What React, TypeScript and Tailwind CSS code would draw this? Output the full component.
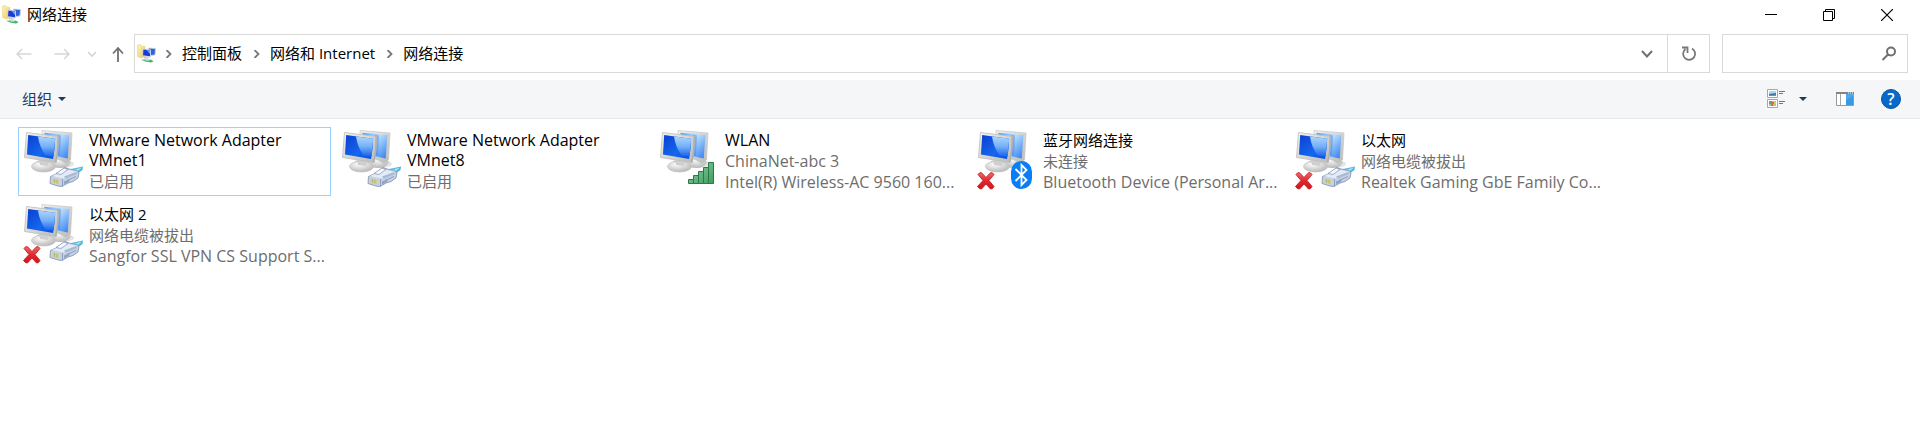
import type { ReactNode } from "react";

type Badge = "plug" | "signal" | "bluetooth";

interface Connection {
  name: string;
  details: string[];
  badge: Badge;
  disconnected?: boolean;
  selected?: boolean;
}

const connections: Connection[] = [
  { name: "VMware Network Adapter VMnet1", details: ["已启用"], badge: "plug", selected: true },
  { name: "VMware Network Adapter VMnet8", details: ["已启用"], badge: "plug" },
  { name: "WLAN", details: ["ChinaNet-abc 3", "Intel(R) Wireless-AC 9560 160..."], badge: "signal" },
  { name: "蓝牙网络连接", details: ["未连接", "Bluetooth Device (Personal Ar..."], badge: "bluetooth", disconnected: true },
  { name: "以太网", details: ["网络电缆被拔出", "Realtek Gaming GbE Family Co..."], badge: "plug", disconnected: true },
  { name: "以太网 2", details: ["网络电缆被拔出", "Sangfor SSL VPN CS Support S..."], badge: "plug", disconnected: true },
];

const latinOnly = /^[\x20-\x7e]+$/;

function textSize(text: string) {
  return latinOnly.test(text) ? "text-[16px]" : "text-[15px]";
}

function Gradients() {
  return (
    <svg width="0" height="0" className="absolute" aria-hidden="true">
      <defs>
        <linearGradient id="screen" x1="0" y1="0" x2="1" y2="1">
          <stop offset="0" stopColor="#0a3fd0" />
          <stop offset="0.6" stopColor="#1566ee" />
          <stop offset="1" stopColor="#0a50e0" />
        </linearGradient>
        <linearGradient id="glare" x1="0" y1="0" x2="0" y2="1">
          <stop offset="0" stopColor="#b5dcfb" />
          <stop offset="0.5" stopColor="#7ab4f8" />
          <stop offset="1" stopColor="#1764ef" />
        </linearGradient>
        <linearGradient id="backScreen" x1="0" y1="0" x2="1" y2="1">
          <stop offset="0" stopColor="#4e9df5" />
          <stop offset="0.4" stopColor="#b9defa" />
          <stop offset="1" stopColor="#2d7cf3" />
        </linearGradient>
        <linearGradient id="frame" x1="0" y1="0" x2="1" y2="1">
          <stop offset="0" stopColor="#f3f3f1" />
          <stop offset="1" stopColor="#b9b9b7" />
        </linearGradient>
        <radialGradient id="base" cx="0.4" cy="0.3" r="0.7">
          <stop offset="0" stopColor="#ffffff" />
          <stop offset="1" stopColor="#b8b8b8" />
        </radialGradient>
        <linearGradient id="bars" x1="0" y1="0" x2="1" y2="1">
          <stop offset="0" stopColor="#8fd3a3" />
          <stop offset="1" stopColor="#3f9b60" />
        </linearGradient>
        <linearGradient id="cross" x1="0" y1="0" x2="0" y2="1">
          <stop offset="0" stopColor="#f4696c" />
          <stop offset="0.5" stopColor="#e0282e" />
          <stop offset="1" stopColor="#d81219" />
        </linearGradient>
        <linearGradient id="folder" x1="0" y1="0" x2="1" y2="1">
          <stop offset="0" stopColor="#fff3b8" />
          <stop offset="1" stopColor="#ecc95f" />
        </linearGradient>
      </defs>
    </svg>
  );
}

function ConnectionIcon({ badge, disconnected }: { badge: Badge; disconnected?: boolean }) {
  return (
    <svg width="62" height="62" viewBox="0 0 62 62" className="shrink-0" aria-hidden="true">
      <ellipse cx="39" cy="34" rx="12" ry="4" fill="#d0d0d0" opacity="0.6" />
      <path d="M30 31 39 26 48 32Q45 38 37 38L29 37Z" fill="url(#base)" />
      <path d="M19 .5 49 3 47.500 30 43 33.500 37 30 20 24Z" fill="url(#frame)" stroke="#c4c4c2" strokeWidth="0.7" />
      <path d="M21 2.700 46.500 5 44.700 28.500 33 26Z" fill="url(#backScreen)" />
      <path d="M34 5 38 5.500 37 26 33 25Z" fill="#3781ee" opacity="0.45" />
      <path d="M14 31 27 29 30 37 16 38Z" fill="#b2b2b1" />
      <ellipse cx="20.500" cy="36.500" rx="12" ry="5.500" fill="url(#base)" stroke="#c4c4c4" strokeWidth="0.7" />
      <path d="M16 29 26 31 25 36 17 35Z" fill="#cfcfce" />
      <path d="M3.500 2.500 35.500 6.500Q35.500 21 33 32.500L1.500 27.500Z" fill="url(#frame)" stroke="#bcbdbd" strokeWidth="0.8" />
      <path d="M35 7Q35.200 21 32.700 32.300" fill="none" stroke="#acadad" strokeWidth="1.200" />
      <path d="M5.200 5 32.200 8.700Q31.900 20 30 29L4 24.500Z" fill="url(#screen)" />
      <path d="M15 6.500 32.200 8.700 30.500 26.500 22.500 25.500Q16.500 17 15 6.500Z" fill="url(#glare)" opacity="0.95" />
      {badge === "plug" && (
        <g strokeLinejoin="round">
          <path d="M48 39 60 36.500 59.500 40 54 44 48 43Z" fill="#4db8dc" />
          <path d="M50 40 59 37.500 55 41Z" fill="#a5e2f4" />
          <path d="M27.500 46.500 34 43.500 42 37.500 46 39 54 40.500 56 43 55 48 50 51.500 45 53 39 56.500 35 56 27 53.500Z" fill="#c5d1e4" stroke="#8798b8" strokeWidth="0.900" />
          <path d="M29 46 40 48.500 54 42 44 39.500Z" fill="#e3ebf6" />
          <path d="M33 43.500 41 38 45 39.500 38 44.500Z" fill="#f5f8fd" stroke="#8090b0" strokeWidth="0.700" />
          <path d="M41 46.500 53 42 54 44 43 48.500Z" fill="#a9bad5" />
          <path d="M39.500 49V56M44 50.500 53 46.500" fill="none" stroke="#8799bb" strokeWidth="0.900" />
          <path d="M41 51.500 47 49 46 52 41 54.500Z" fill="#8fa3c4" />
          <path d="M29.500 48.500 36 50V54L29.500 52.500Z" fill="#d6cf7c" />
          <path d="M31.500 49V53M34 49.500V53.500" stroke="#a9aa78" strokeWidth="0.700" />
        </g>
      )}
      {badge === "signal" && (
        <g fill="url(#bars)" stroke="#287a49" strokeWidth="1">
          <path d="M29.500 49.500h5v4h-5zM34.500 45.500h5v8h-5zM39.500 41.500h5v12h-5zM44.500 37.500h5v16h-5zM49.500 32.500h5v21h-5z" />
        </g>
      )}
      {badge === "bluetooth" && (
        <g>
          <rect x="34" y="31" width="21" height="28" rx="10.500" fill="#0a7ff5" />
          <path d="M38.500 39 49.500 50 44.500 55V35L49.500 40 38.500 51" fill="none" stroke="#fff" strokeWidth="1.800" strokeLinejoin="miter" />
        </g>
      )}
      {disconnected && (
        <path
          transform="translate(-1.500 -1)"
          d="M2.500 45.500Q4 43 6 43.700L10.500 48.500 15 43.700Q17 43 18.500 45.500L13.500 51.500 18.500 57.500Q17 60.500 15 60L10.500 55 6 60Q4 60.500 2 57.500L7.500 51.500Z"
          fill="url(#cross)"
          stroke="#bd2227"
          strokeWidth="0.900"
        />
      )}
    </svg>
  );
}

function NetworkFolderIcon() {
  return (
    <svg width="20" height="20" viewBox="0 0 20 20" className="shrink-0" aria-hidden="true">
      <path d="M.5 1 3.500 .5 4.500 2 8 2.500V13L4 14 .5 12.500Z" fill="url(#folder)" stroke="#e6cd7c" strokeWidth="0.500" />
      <path d="M11.500 4 18.500 4.500 18 11 13 11.500Z" fill="#2f62d6" stroke="#cbd5e2" strokeWidth="0.900" />
      <path d="M6 5 13.500 5.800V12.800L5.500 11.700Z" fill="#1a3bd0" stroke="#d4dce8" strokeWidth="0.900" />
      <path d="M9.500 6 13 6.500V10Z" fill="#6fa7f2" />
      <path d="M7 12.800 12.500 13.500 11.500 14.800 7 14.500Z" fill="#c5cbd0" />
      <path d="M4 15.800 8 15.500 10 16 14 15.500 16.500 17.500 14 18.500 9 17.800Z" fill="#43b66a" />
      <path d="M8 15.500 11 15.500 13 17 9 17Z" fill="#a9c9ba" />
    </svg>
  );
}

function Stroke({ size = 16, d, width = 1.5, className = "" }: { size?: number; d: string; width?: number; className?: string }) {
  return (
    <svg width={size} height={size} viewBox={`0 0 ${size} ${size}`} fill="none" stroke="currentColor" strokeWidth={width} className={`shrink-0 ${className}`} aria-hidden="true">
      <path d={d} />
    </svg>
  );
}

function WindowButton({ label, children }: { label: string; children: ReactNode }) {
  return (
    <button type="button" aria-label={label} className="flex h-full w-[58px] items-center justify-center hover:bg-gray-200">
      {children}
    </button>
  );
}

function Crumb({ children }: { children: ReactNode }) {
  return (
    <li className="flex items-center">
      <Stroke size={8} d="M1.500 0 5.500 4 1.500 8" width={1.8} className="mr-[9px] text-[#777]" />
      <a href="#" className="whitespace-pre">{children}</a>
    </li>
  );
}

function ConnectionTile({ item }: { item: Connection }) {
  return (
    <li className={`flex h-[69px] w-[313px] border ${item.selected ? "border-[#99d1ff]" : "border-transparent"}`}>
      <a href="#" className="flex min-w-0 flex-1 gap-1 pt-[2px] pl-1">
        <ConnectionIcon badge={item.badge} disconnected={item.disconnected} />
        <span className="flex min-w-0 flex-1 flex-col">
          <span className={`pb-px leading-5 ${textSize(item.name)}`}>{item.name}</span>
          {item.details.map((line) => (
            <span key={line} className={`leading-[21px] whitespace-nowrap text-[#6d6d6d] ${textSize(line)}`}>{line}</span>
          ))}
        </span>
      </a>
    </li>
  );
}

export default function App() {
  return (
    <div className="min-h-screen bg-white font-['Open_Sans','Noto_Sans_CJK_SC',sans-serif] text-[15px] text-black">
      <Gradients />
      <header className="flex h-[29px] items-center pl-[2px]">
        <NetworkFolderIcon />
        <h1 className="ml-[5px] flex-1">网络连接</h1>
        <div className="flex h-full pr-1">
          <WindowButton label="最小化"><Stroke size={12} d="M0 5.500H12" width={1} /></WindowButton>
          <WindowButton label="向下还原"><Stroke size={12} d="M.5 2.500H9.500V11.500H.5ZM2.500 2.500V.5H11.500V9.500H9.500" width={1} /></WindowButton>
          <WindowButton label="关闭"><Stroke size={12} d="M0 0 12 12M12 0 0 12" width={1.2} /></WindowButton>
        </div>
      </header>

      <div className="flex items-center gap-3 pt-[5px] pr-3 pb-[7px]">
        <nav className="flex flex-1 items-center" aria-label="导航">
          <div className="flex w-[134px] items-center pl-4 text-[#d6d6d6]">
            <button type="button" aria-label="后退"><Stroke d="M15.500 8H1M6 3 1 8 6 13" /></button>
            <button type="button" aria-label="前进" className="ml-[22px]"><Stroke d="M.5 8H15M10 3 15 8 10 13" /></button>
            <button type="button" aria-label="最近的位置" className="ml-[18px]"><Stroke size={8} d="M0 2 4 6 8 2" width={1.6} /></button>
            <button type="button" aria-label="上移" className="ml-[14px] text-[#707070]"><Stroke d="M8 16.500V2M3 7.500 8 2 13 7.500" width={1.8} /></button>
          </div>
          <div className="flex h-[39px] flex-1 items-center border border-[#d9d9d9] pl-[2px]">
            <NetworkFolderIcon />
            <ol className="ml-2 flex flex-1 items-center gap-[11px]">
              <Crumb>控制面板</Crumb>
              <Crumb>网络和 Internet</Crumb>
              <Crumb>网络连接</Crumb>
            </ol>
            <button type="button" aria-label="以前的位置" className="flex h-full w-10 items-center justify-center text-[#707070]">
              <Stroke size={12} d="M1 3 6 8.500 11 3" width={2} />
            </button>
            <button type="button" aria-label="刷新" className="flex h-full w-[42px] items-center justify-center border-l border-[#d9d9d9] text-[#777]">
              <Stroke d="M11 2.500A6 6 0 1 1 4.500 3M1 1.500H6.500V7" width={1.8} />
            </button>
          </div>
        </nav>
        <form className="flex h-[39px] w-[186px] items-center border border-[#d9d9d9] pr-[10px]">
          <input type="text" aria-label="搜索" className="h-full min-w-0 flex-1 px-2 outline-none" />
          <button type="button" aria-label="开始搜索" className="text-[#707070]">
            <Stroke d="M7 8.500 1.500 14M10 1.500a4 4 0 1 1 0 8a4 4 0 1 1 0-8" width={2} />
          </button>
        </form>
      </div>

      <div className="flex h-[39px] items-center border-b border-[#e6e7ea] bg-[#f5f6f8] pr-[19px] pl-[22px] text-[#1e395b]">
        <button type="button" className="flex items-center gap-[6px]">
          组织
          <svg width="8" height="4" viewBox="0 0 8 4" aria-hidden="true"><path d="M0 0H8L4 4Z" fill="currentColor" /></svg>
        </button>
        <div className="ml-auto flex items-center">
          <button type="button" aria-label="更改视图">
            <svg width="18" height="20" viewBox="0 0 18 20" aria-hidden="true">
              <path d="M.5.5h10v8H.5zM.5 10.500h10v8H.5z" fill="#fff" stroke="#a6a6a6" />
              <path d="M2 2h7v3H2z" fill="#a9d6f3" />
              <path d="M2 5 9 4V7H2z" fill="#4673a0" />
              <path d="M2 6.200 9 5.700V7H2z" fill="#5aa487" />
              <path d="M2 12h7v5H2z" fill="#a9cc70" />
              <path d="M2 12h3v3H2z" fill="#5e96d0" />
              <path d="M5 13h2v2H5zM4 15h2v2H4z" fill="#d9694f" />
              <path d="M7 12h2v3H7z" fill="#e5c94d" />
              <path d="M12 2.500h6M12 4.500h4M12 12.500h6M12 14.500h4" stroke="#777" />
            </svg>
          </button>
          <button type="button" aria-label="更多选项" className="ml-[14px]">
            <svg width="8" height="4" viewBox="0 0 8 4" aria-hidden="true"><path d="M0 0H8L4 4Z" fill="currentColor" /></svg>
          </button>
          <button type="button" aria-label="显示预览窗格" className="ml-[29px]">
            <svg width="18" height="14" viewBox="0 0 18 14" aria-hidden="true">
              <path d="M.5.5h17v13H.5z" fill="#fff" stroke="#999" />
              <path d="M0 0h18v2H0z" fill="#858585" />
              <path d="M12 1h1M14 1h1M16 1h1" stroke="#fff" />
              <path d="M4.500 2v11" stroke="#a8a8a8" />
              <path d="M10 2h7v11h-7z" fill="#50a8ec" />
              <path d="M10 8 17 4v9h-7z" fill="#399ae2" />
            </svg>
          </button>
          <button type="button" aria-label="获取帮助" className="ml-[27px] flex size-5 items-center justify-center rounded-full border border-[#07559f] bg-[#0669cb] text-[16px] leading-none font-semibold text-white">
            ?
          </button>
        </div>
      </div>

      <main className="pt-2 pr-3 pl-[18px]">
        <ul className="flex flex-wrap gap-[5px]">
          {connections.map((item) => (
            <ConnectionTile key={item.name} item={item} />
          ))}
        </ul>
      </main>
    </div>
  );
}
